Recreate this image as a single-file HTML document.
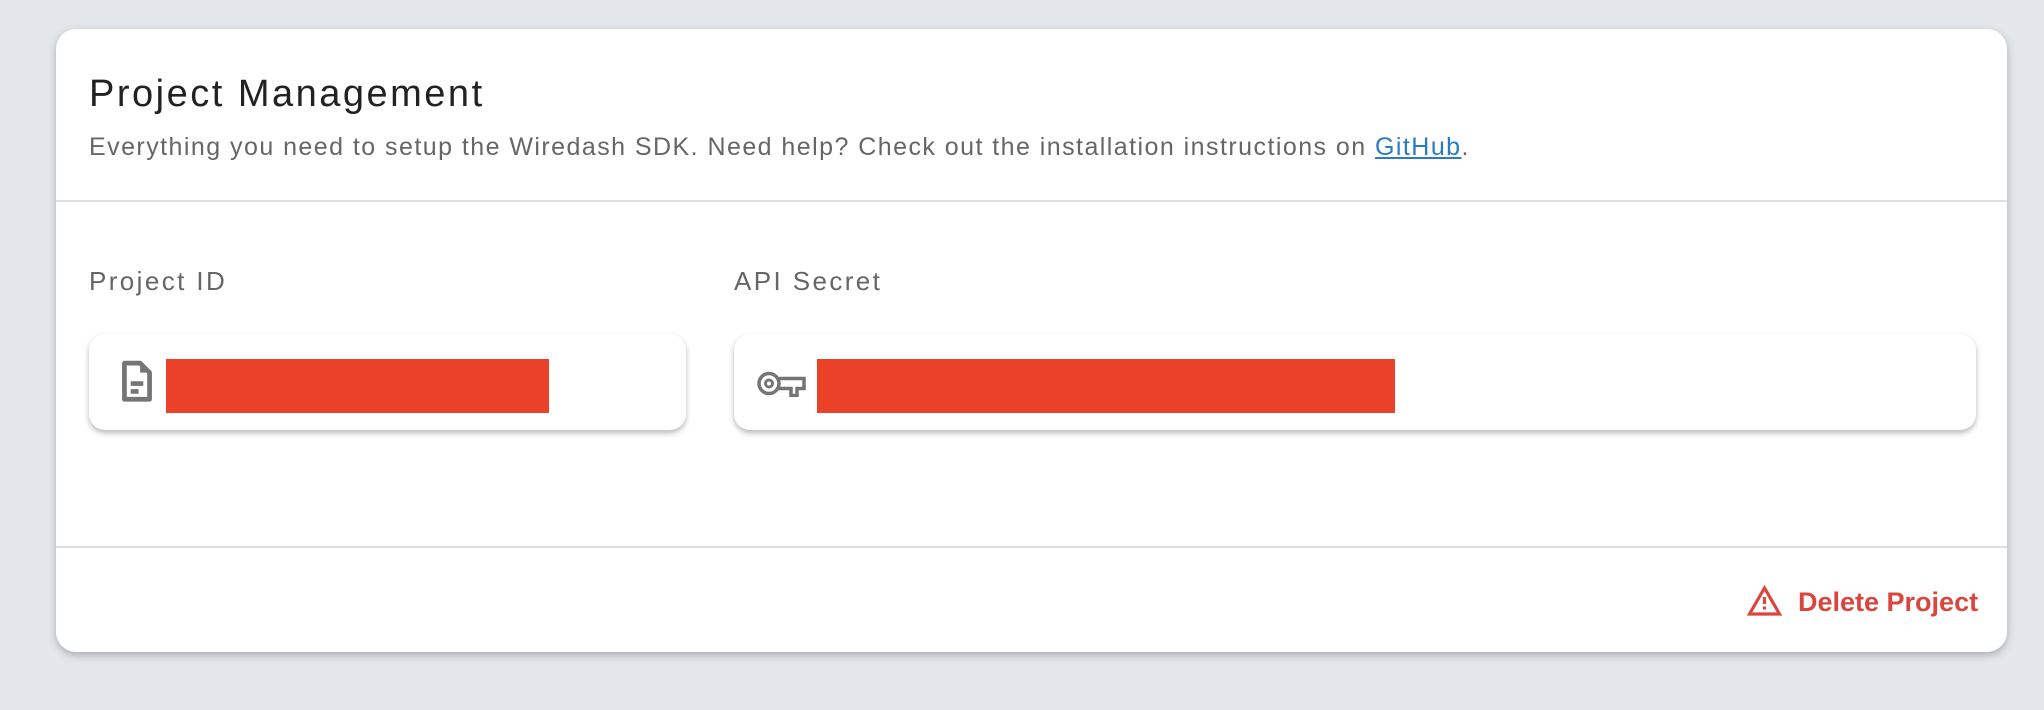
<!DOCTYPE html>
<html><head><meta charset="utf-8"><style>
*{margin:0;padding:0;box-sizing:border-box}
body{width:2044px;height:710px;background:#e3e6eb;font-family:"Liberation Sans",sans-serif;position:relative;overflow:hidden}
.card{position:absolute;left:56px;top:29px;width:1951px;height:623px;background:#fff;border-radius:20px;box-shadow:0 3px 8px rgba(0,0,0,.25)}
.t{position:absolute;left:89px;top:73px;font-size:38px;letter-spacing:2.5px;color:#222;white-space:nowrap}
.s{position:absolute;left:89px;top:133px;font-size:25px;letter-spacing:1.45px;color:#666;white-space:nowrap}
.s a{color:#2a7bc4;text-decoration:underline}
.hr{position:absolute;left:56px;width:1951px;height:2px;background:#e0e0e0}
.lbl{position:absolute;top:266px;font-size:26px;letter-spacing:2.4px;color:#666}
.box{position:absolute;top:334px;height:96px;background:#fff;border-radius:16px;box-shadow:0 3px 6px rgba(0,0,0,.28)}
.red{position:absolute;background:#ea4128}
.del{position:absolute;left:1798px;top:587px;font-size:27px;font-weight:bold;color:#d9463e;white-space:nowrap}
</style></head><body>
<div class="card"></div>
<div class="t">Project Management</div>
<div class="s">Everything you need to setup the Wiredash SDK. Need help? Check out the installation instructions on <a>GitHub</a>.</div>
<div class="hr" style="top:200px"></div>
<div class="lbl" style="left:89px">Project ID</div>
<div class="lbl" style="left:734px">API Secret</div>
<div class="box" style="left:89px;width:597px"></div>
<div class="box" style="left:734px;width:1242px"></div>
<div class="red" style="left:166px;top:359px;width:383px;height:54px"></div>
<div class="red" style="left:817px;top:359px;width:578px;height:54px"></div>
<svg style="position:absolute;left:118px;top:360px" width="38" height="44" viewBox="0 0 24 28"><path d="M4 2h10l6 6v17H4z" fill="none" stroke="#757575" stroke-width="3" stroke-linejoin="round"/><path d="M14 2v6h6z" fill="#757575"/><path d="M8 15h8M8 20h5" stroke="#757575" stroke-width="3"/></svg>
<svg style="position:absolute;left:757px;top:370px" width="49" height="27" viewBox="0 0 49 27"><circle cx="12" cy="13.5" r="10" fill="none" stroke="#757575" stroke-width="3.5"/><circle cx="12" cy="13.5" r="3.5" fill="none" stroke="#757575" stroke-width="3"/><path d="M22 8.5h25v10h-7v7h-6v-7h-12" fill="none" stroke="#757575" stroke-width="3.5"/></svg>
<div class="hr" style="top:546px"></div>
<svg style="position:absolute;left:1747px;top:585px" width="35" height="31" viewBox="0 0 35 31"><path d="M17.5 3L2.5 29h30z" fill="none" stroke="#d9463e" stroke-width="3.2" stroke-linejoin="miter"/><path d="M17.5 12v7M17.5 21.5v3" stroke="#d9463e" stroke-width="3.2"/></svg>
<div class="del">Delete Project</div>
</body></html>
